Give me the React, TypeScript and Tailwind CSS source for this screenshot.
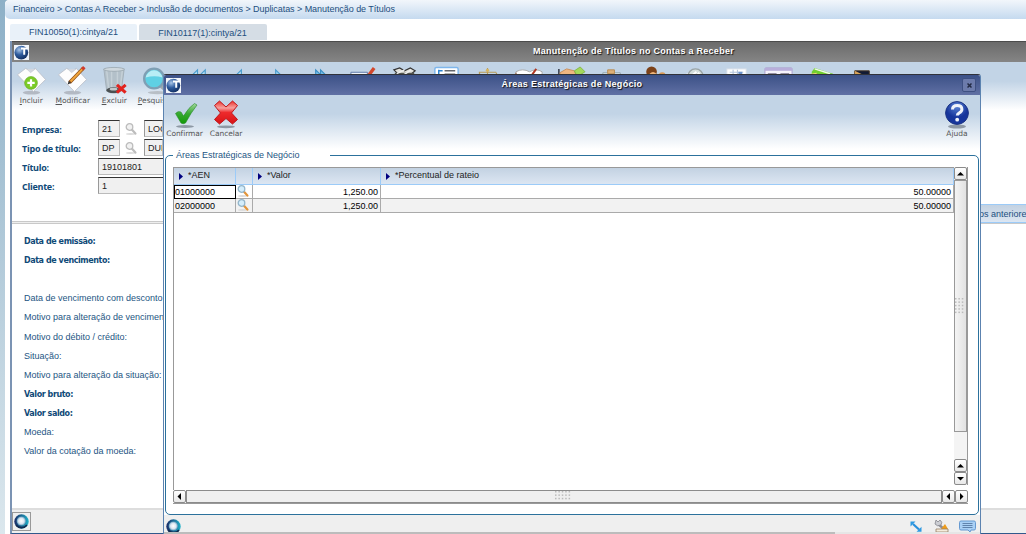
import React from 'react';

const Logo: React.FC = () => (
  <svg className="h-[15px] w-[15px] shrink-0" viewBox="0 0 15 15">
    <defs>
      <radialGradient id="logo" cx="0.35" cy="0.3" r="0.8">
        <stop offset="0" stopColor="#a9c6e8" />
        <stop offset="0.45" stopColor="#2f5c9e" />
        <stop offset="1" stopColor="#0d2757" />
      </radialGradient>
    </defs>
    <rect width="15" height="15" fill="#f2f5fa" />
    <circle cx="7.3" cy="7.6" r="6.9" fill="url(#logo)" />
    <path d="M7 3.4h6.6M10.2 3.4v6.4" stroke="#fff" strokeWidth="2" />
  </svg>
);

const Orb: React.FC = () => (
  <svg className="h-[15px] w-[15px] shrink-0" viewBox="0 0 15 15">
    <defs>
      <linearGradient id="orbRing" x1="0" x2="1">
        <stop offset="0" stopColor="#1a2a66" />
        <stop offset="1" stopColor="#1fb0c8" />
      </linearGradient>
      <radialGradient id="orbIn">
        <stop offset="0" stopColor="#fff" />
        <stop offset="0.6" stopColor="#dbe6f2" />
        <stop offset="1" stopColor="#5f9cbc" />
      </radialGradient>
    </defs>
    <circle cx="7.5" cy="7.5" r="7.2" fill="url(#orbRing)" />
    <path d="M2 11a7 7 0 0 0 11 0" stroke="#102a50" strokeWidth="1.6" fill="none" />
    <circle cx="7.3" cy="7" r="4.6" fill="url(#orbIn)" />
  </svg>
);

const Lens: React.FC<{ muted?: boolean }> = ({ muted }) => (
  <svg className="h-[12px] w-[12px] shrink-0" viewBox="0 0 12 12">
    <ellipse cx="5.5" cy="11" rx="4.5" ry="0.9" fill="#dcdcdc" />
    <path d="M6.8 6.6l3.6 4" stroke={muted ? '#bdbdbd' : '#e2953c'} strokeWidth="2.2" strokeLinecap="round" />
    <circle cx="4.5" cy="4" r="3.3" fill={muted ? '#f1f1f1' : '#d4edfb'} stroke={muted ? '#bcbcbc' : '#93b5ca'} strokeWidth="1.3" />
  </svg>
);

const Paper: React.FC = () => (
  <>
    <ellipse cx="16" cy="27.5" rx="9" ry="2" fill="#a9aeb8" opacity="0.8" />
    <path d="M1.5 9L10 2.5l3 1.6 4 0 3-1.6L30.5 14 18 26.5z" fill="#fdfdfd" stroke="#b9bdc6" strokeWidth="0.8" />
    <path d="M11 3l4 4 5-4" fill="#d3d7df" stroke="#c0c4cc" strokeWidth="0.5" />
  </>
);

const icons: React.ReactNode[] = [
  <>
    <Paper />
    <circle cx="15.5" cy="17.5" r="6.6" fill="#7bcb28" stroke="#5da61b" strokeWidth="0.6" />
    <path d="M15.5 13.7v7.6M11.7 17.5h7.6" stroke="#fff" strokeWidth="2.3" />
  </>,
  <>
    <Paper />
    <path d="M13 17L27 2.5" stroke="#8e4d14" strokeWidth="3.6" />
    <path d="M14 16L26.5 3" stroke="#f0a53c" strokeWidth="2.2" />
    <path d="M26 3.5l2.2-2.3" stroke="#cf3b2c" strokeWidth="3.6" />
    <path d="M11 19l1-3.5 2.5 2.2z" fill="#333" />
  </>,
  <>
    <path d="M5 3h21l-3 23q-8 4-15 0z" fill="#b3c0c9" stroke="#a3b0b9" />
    <path d="M8 5l2 19M13 5v20M19 5v20M24 5l-2 18" stroke="#c5d0d7" strokeWidth="1.5" />
    <ellipse cx="15.5" cy="3.5" rx="10.5" ry="2" fill="#cfd8de" stroke="#99a6ae" strokeWidth="0.8" />
    <ellipse cx="15" cy="25" rx="7.5" ry="3" fill="#4b5052" />
    <ellipse cx="15" cy="24" rx="4" ry="1.4" fill="#c3c8ca" />
    <path d="M18.5 19.5l9 8m0-8l-9 8" stroke="#e2231e" strokeWidth="3.2" />
  </>,
  <>
    <ellipse cx="18" cy="27.5" rx="10" ry="1.6" fill="#b8bfc6" />
    <path d="M21 20l7 6" stroke="#a2a8ae" strokeWidth="4" strokeLinecap="round" />
    <circle cx="14.5" cy="13" r="10.2" fill="#5fd0e4" stroke="#7f9fb4" strokeWidth="2.4" />
    <path d="M5.8 12a8.8 8.8 0 0 1 17.4 0q-8-3-17.4 0z" fill="#b8edf5" />
  </>,
  <path d="M16 4L5 15l11 9zM24 4L13 15l11 9z" fill="#b9e0f5" stroke="#4c9dce" strokeWidth="1.2" />,
  <path d="M19 4L8 15l11 9z" fill="#b9e0f5" stroke="#4c9dce" strokeWidth="1.2" />,
  <path d="M11 4l11 11-11 9z" fill="#9dd2f0" stroke="#4c9dce" strokeWidth="1.2" />,
  <path d="M10 4l11 11-11 9zM15 4l11 11-11 9z" fill="#7ac0ea" stroke="#3c8fc4" strokeWidth="1.2" />,
  <>
    <path d="M3 6.5h17v14H3z" fill="#eef3fb" stroke="#5d79a8" />
    <path d="M21 10l6-8" stroke="#d2472c" strokeWidth="3.4" />
  </>,
  <>
    <path d="M5 4l6-2 5 3 6-3 5 3-5 4H10z" fill="#e2e2dc" stroke="#333" strokeWidth="1.2" />
    <path d="M6 7h20v16H6z" fill="#55564f" />
    <path d="M8 8l8-4m-2 6l9-6" stroke="#eee" strokeWidth="1.5" />
  </>,
  <>
    <rect x="4" y="1.5" width="24" height="22" rx="1.5" fill="#fff" stroke="#7eb6ec" strokeWidth="1.5" />
    <path d="M8 4v16M8 5h4m-4 4h4" stroke="#2d83cf" strokeWidth="1.5" />
    <path d="M14 5h11M14 8.5h11" stroke="#65686e" strokeWidth="1.6" />
  </>,
  <>
    <path d="M16 2v22M7 6.5h18M8 7l-3 9m20-9l3 9" stroke="#b89b58" strokeWidth="1.2" fill="none" />
    <circle cx="16" cy="4.5" r="1.7" fill="#d7b560" />
  </>,
  <>
    <path d="M2 6q7-4 14 0 7-4 13 0v15H2z" fill="#fff" stroke="#a9a9a9" />
    <path d="M2 7v14" stroke="#a87860" strokeWidth="1.5" />
    <path d="M18 10l5-7" stroke="#b03824" strokeWidth="2" />
  </>,
  <>
    <path d="M4 3v12" stroke="#2b3140" strokeWidth="1.5" />
    <path d="M5 7l7-4 8 2 3 8H6z" fill="#eeb681" stroke="#c68348" strokeWidth="0.8" />
    <path d="M20 5l6-4 5 5-8 5z" fill="#a4d85b" stroke="#78b33a" strokeWidth="0.8" />
  </>,
  <>
    <path d="M6 7h18v15H6z" fill="#dae6ea" stroke="#93a5ae" />
    <path d="M11 4h7v4h-7z" fill="#ddb078" stroke="#b98b51" />
  </>,
  <>
    <circle cx="14" cy="6" r="5.5" fill="#7c4219" />
    <path d="M12 8q4-4 8 1v5h-8z" fill="#f0b67a" />
    <circle cx="25" cy="10" r="3.5" fill="#db9a55" />
  </>,
  <>
    <path d="M3 10l9-5 16 6v12H3z" fill="#f1f3f3" />
    <circle cx="16" cy="11" r="8" fill="#d5dedc" stroke="#9aa4a5" strokeWidth="1.5" />
    <path d="M11 11l6-5m-2 6l5-5" stroke="#fff" strokeWidth="2" />
  </>,
  <>
    <rect x="6" y="3" width="20" height="20" fill="#fff" stroke="#d5dde6" />
    <path d="M9 6.5h14M9 10h14M12.5 4v10M17 4v10" stroke="#b4c5dc" strokeWidth="1.2" />
    <path d="M18 6h4v4h-4z" fill="#6e94cc" />
  </>,
  <>
    <rect x="2" y="2" width="28" height="22" rx="1" fill="#f5f3fb" stroke="#a99fce" />
    <path d="M2 2h28v3H2z" fill="#b8aedb" />
    <path d="M5 8h9m4 0h9" stroke="#777288" strokeWidth="1.2" />
  </>,
  <>
    <path d="M8 6l3-4 19 6v14H8z" fill="#72ce2f" />
    <path d="M11 3l16 5" stroke="#effbe6" strokeWidth="1.6" />
    <path d="M2 9l11-2v12H2z" fill="#f0d26d" />
  </>,
  <>
    <path d="M9 5h15v20H9z" fill="#111a35" stroke="#463321" />
    <path d="M9 5l13 6v14H9z" fill="#d7a257" />
  </>,
];

const toolLabels = ['Incluir', 'Modificar', 'Excluir', 'Pesquisar'];

const Label: React.FC<{ text: string; heavy?: boolean }> = ({ text, heavy }) => (
  <div
    className={
      heavy
        ? "h-[19.15px] font-['DejaVu_Sans'] text-[8px] leading-[19px] font-bold tracking-[-0.42px] text-[#0f4a78]"
        : "h-[19.15px] font-['Liberation_Sans'] text-[9px] leading-[19px] text-[#1d5583]"
    }
  >
    {text}
  </div>
);

const Field: React.FC<{ value: string; width: string }> = ({ value, width }) => (
  <div
    className={`h-[17px] shrink-0 overflow-hidden border-t border-l border-t-[#333] border-l-[#999] border-r border-b border-r-[#bbb] border-b-[#bbb] bg-[#f0f0f0] pl-[3px] text-[9px] leading-[16px] text-[#222] ${width}`}
  >
    {value}
  </div>
);

const ScrollButton: React.FC<{ d: string }> = ({ d }) => (
  <div className="flex h-[13px] w-[13px] shrink-0 items-center justify-center rounded-[2px] border border-[#8b8b8b] bg-linear-to-b from-white to-[#e8e8e8]">
    <svg className="h-[7px] w-[7px]" viewBox="0 0 7 7">
      <path d={d} fill="#000" />
    </svg>
  </div>
);

const Grip: React.FC<{ cols: number; rows: number }> = ({ cols, rows }) => (
  <svg width={cols * 3.4} height={rows * 3.4}>
    {Array.from({ length: cols * rows }, (_, i) => (
      <rect key={i} x={(i % cols) * 3.4} y={Math.floor(i / cols) * 3.4} width="1.5" height="1.5" fill="#bbb" />
    ))}
  </svg>
);

const columns = [
  { title: '*AEN', width: 'w-[62px]' },
  { title: '', width: 'w-[17px]' },
  { title: '*Valor', width: 'w-[128px]' },
  { title: '*Percentual de rateio', width: 'w-[573px]' },
];

const rows = [
  { aen: '01000000', valor: '1,250.00', rateio: '50.00000' },
  { aen: '02000000', valor: '1,250.00', rateio: '50.00000' },
];

const AreasDialog: React.FC = () => (
  <div className="absolute top-[74px] left-[163px] flex h-[460px] w-[818px] flex-col overflow-hidden rounded-t-[3px] border-x border-t border-x-[#5c83b0] border-t-[#30323a] bg-white">
    <div className="flex h-[20px] shrink-0 items-center bg-linear-to-b from-[#3c5187] to-[#6070a4] pr-[4px] pl-[2px]">
      <Logo />
      <div className="flex-1 pl-px text-center text-[9px] font-bold tracking-[0.3px] text-white [text-shadow:1px_1px_1px_#111]">
        Áreas Estratégicas de Negócio
      </div>
      <div className="flex h-[14px] w-[14px] items-center justify-center rounded-[2px] border border-[#3e5082] bg-[#6c7bab]">
        <svg className="h-[5px] w-[5px]" viewBox="0 0 5 5">
          <path d="M0.5 0.5l4 4m0-4l-4 4" stroke="#222a44" strokeWidth="1.5" />
        </svg>
      </div>
    </div>

    {/* Toolbar */}
    <div className="flex h-[54px] shrink-0 bg-linear-to-b from-[#c2d4e6] from-35% to-white pt-[4px] font-['DejaVu_Sans'] text-[7.5px] leading-[10px] text-[#555]">
      <div className="flex w-[41px] flex-col items-center">
        <svg className="h-[30px] w-[30px] shrink-0" viewBox="0 0 30 30">
          <defs>
            <linearGradient id="ok" x2="0" y2="1">
              <stop offset="0" stopColor="#a0d69c" />
              <stop offset="0.5" stopColor="#36a92f" />
              <stop offset="1" stopColor="#119a08" />
            </linearGradient>
          </defs>
          <ellipse cx="15" cy="27.5" rx="9" ry="1.5" fill="#8e99a5" />
          <path d="M5.5 14.5q2.5-3 5.500-1.500l2.500 4q5.500-9 11-12.500l2.500 1.500Q21 13.500 15.500 24q-2.500 1.500-4.500 0z" fill="url(#ok)" stroke="#288c2b" strokeWidth="0.6" />
        </svg>
        <span className="tracking-[-0.1px]">Confirmar</span>
      </div>
      <div className="flex w-[42px] flex-col items-center">
        <svg className="h-[30px] w-[30px] shrink-0" viewBox="0 0 30 30">
          <defs>
            <linearGradient id="no" x2="0" y2="1">
              <stop offset="0" stopColor="#ee3029" />
              <stop offset="0.3" stopColor="#f7a29f" />
              <stop offset="0.5" stopColor="#ee2a2c" />
              <stop offset="1" stopColor="#d71317" />
            </linearGradient>
          </defs>
          <ellipse cx="15" cy="27.8" rx="9" ry="1.4" fill="#8e99a5" />
          <path d="M8.5 2l6.500 6 6.500-6 5 4.500-6 7.500 6 6.500-5 4.500-6.500-5.500-6.500 5.500-5-4.500 6-6.500-6-7.500z" fill="url(#no)" stroke="#c0161b" strokeWidth="1" strokeLinejoin="round" />
        </svg>
        <span className="tracking-[-0.1px]">Cancelar</span>
      </div>
      <div className="ml-auto flex w-[46px] flex-col items-center">
        <svg className="h-[30px] w-[30px] shrink-0" viewBox="0 0 30 30">
          <defs>
            <radialGradient id="help" cy="0.2">
              <stop offset="0" stopColor="#5c84d4" />
              <stop offset="1" stopColor="#16359c" />
            </radialGradient>
          </defs>
          <ellipse cx="15" cy="27.5" rx="9" ry="2" fill="#8e99a5" />
          <circle cx="15" cy="14" r="11.4" fill="url(#help)" stroke="#1c3484" strokeWidth="1" />
          <path d="M10.5 10.5q0-4 4.7-4t4.7 3.8q0 2.300-2.600 3.500-2 1-2 2.700" fill="none" stroke="#f0f3fa" strokeWidth="3" />
          <circle cx="15.2" cy="20.7" r="1.9" fill="#f0f3fa" />
        </svg>
        <span>Ajuda</span>
      </div>
    </div>

    {/* Group box */}
    <fieldset className="mx-px h-[366px] min-w-0 shrink-0 rounded-[5px] border border-[#2c719c] pl-[7px]">
      <legend className="h-[12px] w-[157px] pl-[3px] text-[9px] leading-[13px] whitespace-nowrap text-[#1d5583]">
        Áreas Estratégicas de Negócio
      </legend>
      <div className="mt-[6px] h-[337px] w-[795px]">
        <div className="flex h-[318px]">
          <div className="w-[781px] shrink-0 border-t border-l border-[#999]">
            <div className="flex h-[17px] border-b border-[#9ccbf8] bg-linear-to-b from-[#c3d2e2] to-[#dce6f2]">
              {columns.map((col, i) => (
                <div key={i} className={`flex shrink-0 items-start border-r border-[#9ccbf8] ${col.width}`}>
                  {col.title && (
                    <>
                      <svg className="mt-[5px] ml-[5px] h-[7px] w-[4px]" viewBox="0 0 4 7">
                        <path d="M0 0l4 3.5-4 3.5z" fill="#000080" />
                      </svg>
                      <span className="pt-px pl-[5px] text-[9px] leading-[12px] text-[#222]">{col.title}</span>
                    </>
                  )}
                </div>
              ))}
            </div>
            {rows.map((row, i) => (
              <div
                key={row.aen}
                className={`flex h-[14px] text-[9px] leading-[14px] text-black ${i === 0 ? 'bg-white' : 'bg-[#f2f2f2]'}`}
              >
                <div
                  className={
                    i === 0
                      ? 'w-[62px] border border-black leading-[12px]'
                      : 'w-[62px] border-r border-b border-[#aaa] pl-px'
                  }
                >
                  {row.aen}
                </div>
                <div className="flex w-[17px] justify-center border-r border-b border-[#aaa] pr-[2px]">
                  <Lens />
                </div>
                <div className="w-[128px] border-r border-b border-[#aaa] pr-[2px] text-right">{row.valor}</div>
                <div className="w-[573px] border-r border-b border-[#aaa] pr-[2px] text-right">{row.rateio}</div>
              </div>
            ))}
            <div className="h-[272px]" />
          </div>
          <div className="flex w-[14px] shrink-0 flex-col border-r border-[#999] bg-[#f4f4f4]">
            <ScrollButton d="M0 5.5h7L3.5 2z" />
            <div className="flex h-[252px] items-center justify-center border border-[#999] bg-linear-to-r from-[#f4f4f4] to-[#e2e2e2]">
              <Grip cols={3} rows={5} />
            </div>
            <div className="flex-1" />
            <ScrollButton d="M0 5.5h7L3.5 2z" />
            <ScrollButton d="M0 2h7L3.5 5.5z" />
          </div>
        </div>
        <div className="h-[5px] border-l border-[#999]" />
        <div className="flex h-[14px] border-b border-[#999]">
          <ScrollButton d="M5 0v7L1.5 3.5z" />
          <div className="flex flex-1 items-center justify-center border border-[#8b8b8b] bg-[#efefef] pr-[2px]">
            <Grip cols={5} rows={3} />
          </div>
          <ScrollButton d="M5 0v7L1.5 3.5z" />
          <ScrollButton d="M2 0v7l3.5-3.5z" />
        </div>
      </div>
    </fieldset>

    {/* Status bar */}
    <div className="flex h-[17px] shrink-0 items-start overflow-hidden bg-[#efefef] pt-[4px] pr-[4px] pl-[2px]">
      <Orb />
      <svg className="mt-[2px] mr-[12px] ml-auto h-[11px] w-[12px] shrink-0" viewBox="0 0 12 11">
        <path d="M3 3l6 5.5" stroke="#278fdc" strokeWidth="2.2" />
        <path d="M0.5 0.5h5l-5 5zM11.5 10.8h-5l5-5z" fill="#2f9ae2" />
      </svg>
      <svg className="mr-[10px] h-[13px] w-[15px] shrink-0" viewBox="0 0 15 13">
        <path d="M4 5l6 5" stroke="#8d8d95" strokeWidth="2.5" />
        <path d="M2 1l2 2 2-2q3 2 1 5-4 2-6-1z" fill="#ccced4" stroke="#85868e" strokeWidth="0.8" />
        <path d="M7 10l4-5 3 5z" fill="#ee9c1b" />
        <path d="M2 10h12v3H2z" fill="#f5ecdc" stroke="#947d62" strokeWidth="0.8" />
      </svg>
      <svg className="mt-px h-[13px] w-[17px] shrink-0" viewBox="0 0 17 13">
        <path d="M2 1h13q1.500 0 1.500 1.500v6q0 1.500-1.500 1.500h-3l-1 2-2-2H2Q0.500 10 0.500 8.500v-6Q0.500 1 2 1z" fill="#a9d0f5" stroke="#6599d1" />
        <path d="M3.500 3.500h10M3.500 5.500h10M3.500 7.500h10" stroke="#5f83ad" />
      </svg>
    </div>
    <div className="h-[2px] bg-[#e6e6e6]">
      <div className="h-[2px] w-[671px] bg-[#bcbcbc]" />
    </div>
  </div>
);

const App: React.FC = () => (
  <div className="relative flex h-[534px] w-[1026px] overflow-hidden bg-linear-to-b from-[#8db0c7] to-[#dbe7ed] pl-[5px] font-['Liberation_Sans',sans-serif]">
    <div className="flex min-w-0 flex-1 flex-col rounded-tl-[4px] bg-white">
      <div className="h-[19px] shrink-0 rounded-l-[5px] bg-linear-to-b from-[#f2f6fb] to-[#c5daef] pl-[8px] text-[9px] leading-[18px] tracking-[-0.05px] whitespace-nowrap text-[#1d4f80]">
        Financeiro &gt; Contas A Receber &gt; Inclusão de documentos &gt; Duplicatas &gt; Manutenção de Títulos
      </div>

      <div className="mt-[5px] flex h-[16px] shrink-0 gap-[2px] pl-[5px] text-center text-[9px] leading-[16px] text-[#1d4f80]">
        <div className="w-[127px] rounded-t-[2px] bg-[#e9f1f9]">FIN10050(1):cintya/21</div>
        <div className="w-[128px] rounded-t-[2px] bg-[#d5dde5] pr-px leading-[18px]">FIN10117(1):cintya/21</div>
      </div>

      {/* Main window */}
      <div className="mt-px ml-[5px] flex h-[493px] shrink-0 flex-col border-b border-l-2 border-b-[#31598c] border-l-[#7b93b3]">
        <div className="flex h-[21px] shrink-0 items-center border-t border-[#4c4c4c] bg-linear-to-b from-[#6b6b6b] to-[#858585] pl-[2px]">
          <Logo />
          <div className="flex-1 pl-[212px] text-center text-[9px] font-bold tracking-[0.28px] text-white [text-shadow:1px_1px_1px_#111]">
            Manutenção de Títulos no Contas a Receber
          </div>
        </div>
        <div className="flex h-[48px] shrink-0 bg-linear-to-b from-[#c2d4e6] from-40% to-white pt-[3px] font-['DejaVu_Sans'] text-[7.5px] leading-[9px] text-[#555]">
          {icons.map((icon, i) => (
            <div key={i} className="flex w-[41.5px] shrink-0 flex-col items-center pr-[3px]">
              <svg className="h-[31px] w-[31px] shrink-0" viewBox="0 0 32 30">
                {icon}
              </svg>
              {toolLabels[i] && (
                <span className="whitespace-nowrap">
                  <u>{toolLabels[i][0]}</u>
                  {toolLabels[i].slice(1)}
                </span>
              )}
            </div>
          ))}
        </div>

        <div className="flex h-[111px] shrink-0 pt-[10px] pl-[10px]">
          <div className="w-[76px] font-['Open_Sans'] text-[9px] leading-[19px] font-bold tracking-[-0.25px] whitespace-nowrap text-[#0f4a78]">
            <div>Empresa:</div>
            <div>Tipo de título:</div>
            <div>Título:</div>
            <div>Cliente:</div>
          </div>
          <div className="flex flex-col gap-[2px]">
            <div className="flex items-center">
              <Field value="21" width="w-[22px]" />
              <div className="mx-[5px] flex w-[14px]">
                <Lens muted />
              </div>
              <Field value="LOC" width="w-[19px]" />
            </div>
            <div className="flex items-center">
              <Field value="DP" width="w-[22px]" />
              <div className="mx-[5px] flex w-[14px]">
                <Lens muted />
              </div>
              <Field value="DUP" width="w-[19px]" />
            </div>
            <Field value="19101801" width="w-[120px]" />
            <Field value="1" width="w-[120px]" />
          </div>
        </div>
        <div className="h-[3px] shrink-0 border-y border-[#c9c9c9] bg-[#eee]" />

        <div className="relative h-[284px] shrink-0 pt-[7.5px] pl-[12px] whitespace-nowrap">
          <Label text="Data de emissão:" heavy />
          <Label text="Data de vencimento:" heavy />
          <div className="h-[19.5px]" />
          <Label text="Data de vencimento com desconto:" />
          <Label text="Motivo para alteração de vencimento:" />
          <Label text="Motivo do débito / crédito:" />
          <Label text="Situação:" />
          <Label text="Motivo para alteração da situação:" />
          <Label text="Valor bruto:" heavy />
          <Label text="Valor saldo:" heavy />
          <Label text="Moeda:" />
          <Label text="Valor da cotação da moeda:" />
          <div className="absolute top-[-20px] right-[-5px] h-[19px] w-[65px] border-y border-[#9ccbf8] bg-linear-to-b from-[#c3d2e2] to-[#dce6f2] text-right text-[9px] leading-[19px] text-[#1d4f80]">
            os anteriores
          </div>
        </div>

        <div className="flex flex-1 items-center border-t-2 border-[#ddd] bg-[#efefef]">
          <div className="flex h-[19px] w-[19px] items-center justify-center border border-[#999]">
            <Orb />
          </div>
        </div>
      </div>
    </div>

    <AreasDialog />
  </div>
);

export default App;
